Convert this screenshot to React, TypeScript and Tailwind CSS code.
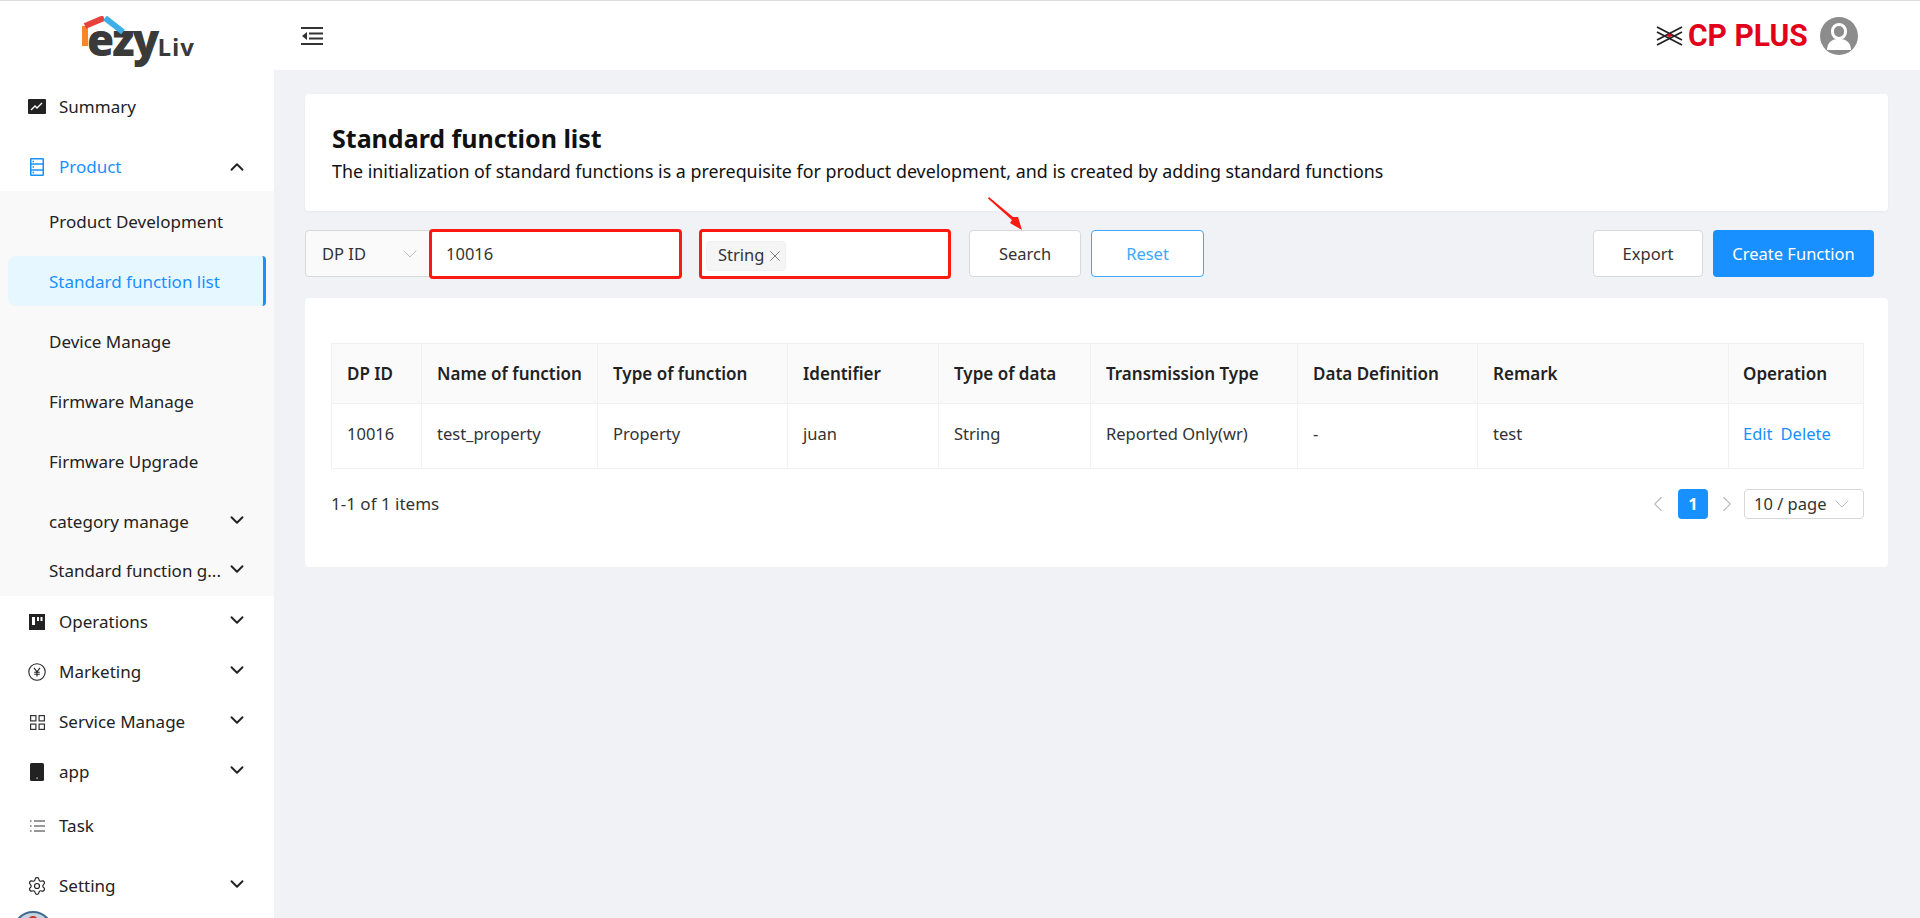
import { ChevronDown, ChevronUp, ChevronLeft, ChevronRight, X, Settings } from 'lucide-react'
import type { ReactNode } from 'react'

const columns = [
  { title: 'DP ID', value: '10016', width: 'w-[90px]' },
  { title: 'Name of function', value: 'test_property', width: 'w-[176px]' },
  { title: 'Type of function', value: 'Property', width: 'w-[190px]' },
  { title: 'Identifier', value: 'juan', width: 'w-[151px]' },
  { title: 'Type of data', value: 'String', width: 'w-[152px]' },
  { title: 'Transmission Type', value: 'Reported Only(wr)', width: 'w-[207px]' },
  { title: 'Data Definition', value: '-', width: 'w-[180px]' },
  { title: 'Remark', value: 'test', width: 'w-[251px]' },
]

function ChartIcon() {
  return (
    <svg viewBox="0 0 18 15" className="w-[18px] h-[15px]">
      <rect width="18" height="15" rx="1" fill="#222" />
      <path d="M3 11l4-4 2 2 5-5" stroke="#fff" strokeWidth="1.4" fill="none" />
    </svg>
  )
}

function ServerIcon() {
  return (
    <svg viewBox="0 0 14 18" className="ml-[2px] w-[14px] h-[18px]" fill="none" stroke="#1890ff" strokeWidth="1.5">
      <rect x="0.75" y="0.75" width="12.5" height="16.5" rx="0.5" />
      <path d="M0.75 6h12.5M0.75 12h12.5M2.5 3.4h1.5M2.5 9h1.5M2.5 14.6h1.5" />
    </svg>
  )
}

function BoardIcon() {
  return (
    <svg viewBox="0 0 16 16" className="ml-[1px] w-4 h-4">
      <rect width="16" height="16" fill="#222" />
      <rect x="3" y="3" width="3" height="8" fill="#fff" />
      <rect x="8" y="3" width="2" height="4" fill="#fff" />
      <rect x="11.5" y="3" width="2" height="4" fill="#fff" />
    </svg>
  )
}

function YenIcon() {
  return (
    <svg viewBox="0 0 18 18" className="w-[18px] h-[18px]" fill="none" stroke="#222" strokeWidth="1.1">
      <circle cx="9" cy="9" r="8.2" />
      <path d="M6 4.8l3 4 3-4M9 8.8v4.8M6.2 9.2h5.6M6.2 11.2h5.6" />
    </svg>
  )
}

function GridIcon() {
  return (
    <svg viewBox="0 0 15 15" className="ml-[2px] w-[15px] h-[15px]" fill="none" stroke="#333" strokeWidth="1.2">
      <rect x="0.6" y="0.6" width="5.3" height="5.3" />
      <rect x="9.1" y="0.6" width="5.3" height="5.3" />
      <rect x="0.6" y="9.1" width="5.3" height="5.3" />
      <rect x="9.1" y="9.1" width="5.3" height="5.3" />
    </svg>
  )
}

function PhoneIcon() {
  return (
    <svg viewBox="0 0 14 18" className="ml-[2px] w-[14px] h-[18px]">
      <rect width="14" height="18" rx="1.5" fill="#222" />
      <rect x="6.5" y="14.5" width="1.2" height="1.2" fill="#fff" />
    </svg>
  )
}

function TaskIcon() {
  return (
    <svg viewBox="0 0 15 12" className="ml-[2px] w-[15px] h-[12px]" fill="none" stroke="#333" strokeWidth="1.2">
      <path d="M4 1h11M4 6h11M4 11h11" />
      <path d="M0 1h1.6M0 6h1.6M0 11h1.6" />
    </svg>
  )
}

function MenuRow({ icon, label, height, active, open, arrow }: { icon: ReactNode; label: string; height: string; active?: boolean; open?: boolean; arrow?: boolean }) {
  return (
    <div className={`flex items-center pl-[28px] pr-[26px] ${height} ${active ? 'text-[#1890ff]' : 'text-[#222]'}`}>
      <div className="w-[31px] flex items-center">{icon}</div>
      <span className="flex-1">{label}</span>
      {arrow && (open ? <ChevronUp className="w-[22px] h-[22px] text-[#222]" strokeWidth={2.1} /> : <ChevronDown className="w-[22px] h-[22px] text-[#222] -mt-1" strokeWidth={2.1} />)}
    </div>
  )
}

function SubRow({ label, height, arrow }: { label: string; height: string; arrow?: boolean }) {
  return (
    <div className={`flex items-center pl-[49px] pr-[26px] text-[#222] ${height}`}>
      <span className="flex-1 whitespace-nowrap">{label}</span>
      {arrow && <ChevronDown className="w-[22px] h-[22px] -mt-1 shrink-0" strokeWidth={2.1} />}
    </div>
  )
}

function Sidebar() {
  return (
    <aside className="w-[274px] shrink-0 bg-white h-[917px] overflow-hidden text-[17px]">
      {/* Logo */}
      <div className="h-[69px] flex items-center justify-center">
        <div className="relative flex items-baseline mt-[6px] ml-[8px] font-extrabold text-[#3a3a3a] font-['Open_Sans',sans-serif]">
          <svg viewBox="0 0 44 34" className="absolute left-[-5px] top-[-1px] w-[44px] h-[34px]" fill="none" strokeWidth="6">
            <path d="M3 30V10" stroke="#f7862a" />
            <path d="M3 10L22 2" stroke="#e8403a" />
            <path d="M23 2L41 16" stroke="#3eaee8" />
          </svg>
          <span className="text-[44px] leading-none tracking-[-2px]">ezy</span>
          <span className="text-[24px] leading-none font-bold tracking-[1px]">Liv</span>
        </div>
      </div>

      <MenuRow icon={<ChartIcon />} label="Summary" height="h-[73px]" />
      <MenuRow icon={<ServerIcon />} label="Product" height="h-[48px]" active arrow open />

      {/* Product submenu */}
      <div className="bg-[#f9f9f9] h-[405px]">
        <SubRow label="Product Development" height="h-[65px] pb-[3px]" />
        <div className="ml-2 w-[258px] h-[50px] flex items-center pt-[2px] pl-[41px] bg-[#e6f7ff] text-[#1890ff] rounded-l-lg rounded-r border-r-[3px] border-[#1890ff]">
          Standard function list
        </div>
        <SubRow label="Device Manage" height="h-[70px] pt-[2px]" />
        <SubRow label="Firmware Manage" height="h-[50px] pt-[2px]" />
        <SubRow label="Firmware Upgrade" height="h-[70px] pt-[2px]" />
        <SubRow label="category manage" height="h-[50px] pt-[2px]" arrow />
        <SubRow label="Standard function g..." height="h-[50px]" arrow />
      </div>

      <MenuRow icon={<BoardIcon />} label="Operations" height="h-[50px] pt-[2px]" arrow />
      <MenuRow icon={<YenIcon />} label="Marketing" height="h-[50px] pt-[2px]" arrow />
      <MenuRow icon={<GridIcon />} label="Service Manage" height="h-[50px] pt-[2px]" arrow />
      <MenuRow icon={<PhoneIcon />} label="app" height="h-[50px] pt-[2px]" arrow />
      <MenuRow icon={<TaskIcon />} label="Task" height="h-[58px] pt-[2px]" />
      <MenuRow icon={<Settings className="w-[20px] h-[20px] -ml-[1px] text-[#222]" strokeWidth={1.4} />} label="Setting" height="h-[62px] pt-[2px]" arrow />

      {/* avatar, cut by the window bottom */}
      <div className="ml-[13px] -mt-[5px] w-[40px] h-[40px] rounded-full bg-[#c5d3de] border-2 border-[#3f6a91] flex justify-center pt-[3px]">
        <div className="w-[10px] h-[10px] rounded-full bg-[#c0392b]" />
      </div>
    </aside>
  )
}

function Header() {
  return (
    <header className="h-[69px] bg-white flex items-center pl-[27px] pr-[62px] justify-between">
      <svg viewBox="0 0 22 18" className="w-[22px] h-[18px]">
        <path d="M0 1h22M8 6.5h14M8 11.5h14M0 17h22" stroke="#333" strokeWidth="2" fill="none" />
        <path d="M1 9l5-4v8z" fill="#333" />
      </svg>
      <div className="flex items-center">
        <svg viewBox="0 0 27 20" className="w-[27px] h-[20px] mr-[5px]" fill="none" stroke="#222" strokeWidth="1.8">
          <path d="M1 1l25 13M26 1L1 14M1 6l25 13M26 6L1 19" />
          <path d="M13.5 7.5l3 2-3 2-3-2z" fill="#e2001a" stroke="none" />
        </svg>
        <span className="w-[119px] mr-[13px] font-['Roboto',sans-serif] font-bold text-[31px] leading-none text-[#e2001a] scale-x-[0.967] origin-left whitespace-nowrap">CP PLUS</span>
        <div className="w-[38px] h-[38px] rounded-full bg-[#8c8c8c] relative overflow-hidden">
          <div className="absolute left-[11px] top-[6px] w-[16px] h-[17px] rounded-full border-[3px] border-white" />
          <div className="absolute left-[7px] top-[22px] w-[24px] h-[11px] rounded-t-[10px] bg-white" />
        </div>
      </div>
    </header>
  )
}

export default function App() {
  return (
    <div className="w-[1920px] h-[918px] overflow-hidden relative bg-[#f0f2f5] border-t border-[#ddd] font-['Noto_Sans',sans-serif] text-[16.5px] text-[#222]">
      <div className="flex">
        <Sidebar />
        <div className="flex-1 min-w-0">
          <Header />

          <main className="pl-[31px] pr-[32px] pt-[24px]">
            {/* Title card */}
            <section className="bg-white rounded h-[117px] px-[27px] pt-[26px] shadow-[0_1px_3px_rgba(0,0,0,0.04)]">
              <h1 className="text-[25px] leading-[36px] font-bold text-[#111]">Standard function list</h1>
              <p className="text-[17.85px] leading-[30px] text-[#111] whitespace-nowrap">The initialization of standard functions is a prerequisite for product development, and is created by adding standard functions</p>
            </section>

            {/* Filters */}
            <div className="flex items-center mt-[18px] h-[50px]">
              <div className="w-[125px] h-[47px] -mt-[1px] pt-[2px] bg-[#fafafa] border border-[#d9d9d9] rounded-l flex items-center justify-between pl-[16px] pr-[7px] text-[#333]">
                DP ID
                <ChevronDown className="w-[24px] h-[24px] text-[#bfbfbf] -mt-[2px]" strokeWidth={1} />
              </div>
              <div className="-ml-[1px] w-[253px] h-[50px] bg-white border-[3px] border-[#fb1a12] rounded flex items-center pl-[14px] text-[#333]">10016</div>
              <div className="ml-[17px] w-[252px] h-[50px] bg-white border-[3px] border-[#fb1a12] rounded flex items-center pl-[4px]">
                <div className="mt-[3px] w-[80px] h-[30px] bg-[#f5f5f5] border border-[#f0f0f0] rounded-sm flex items-center justify-between pl-[11px] pr-[1px] text-[#333]">
                  String
                  <X className="w-[18px] h-[18px] text-[#777]" strokeWidth={1.3} />
                </div>
              </div>
              <button className="ml-[18px] w-[112px] h-[47px] -mt-[1px] pt-[2px] bg-white border border-[#d9d9d9] rounded text-[#333]">Search</button>
              <button className="ml-[10px] w-[113px] h-[47px] -mt-[1px] pt-[2px] bg-white border border-[#40a9ff] rounded text-[#40a9ff]">Reset</button>
              <div className="ml-auto flex gap-[10px] mr-[14px] -mt-[1px]">
                <button className="w-[110px] h-[47px] pt-[2px] bg-white border border-[#d9d9d9] rounded text-[#333]">Export</button>
                <button className="w-[161px] h-[47px] pt-[2px] bg-[#1890ff] rounded text-white">Create Function</button>
              </div>
            </div>

            {/* Table card */}
            <section className="bg-white rounded mt-[19px] h-[269px] px-[26px] pt-[45px]">
              <div className="flex border border-[#f0f0f0] h-[126px] w-[1533px]">
                {columns.map((col) => (
                  <div key={col.title} className={`${col.width} shrink-0 border-r border-[#f0f0f0]`}>
                    <div className="h-[60px] bg-[#fafafa] border-b border-[#f0f0f0] flex items-center pl-[15px] text-[17px] font-semibold text-[#222] whitespace-nowrap">{col.title}</div>
                    <div className="h-[63px] pb-[2px] flex items-center pl-[15px] text-[#333] whitespace-nowrap">{col.value}</div>
                  </div>
                ))}
                <div className="flex-1">
                  <div className="h-[60px] bg-[#fafafa] border-b border-[#f0f0f0] flex items-center pl-[14px] text-[17px] font-semibold text-[#222]">Operation</div>
                  <div className="h-[63px] pb-[2px] flex items-center gap-[8px] pl-[14px] text-[#1890ff]">
                    <span>Edit</span>
                    <span>Delete</span>
                  </div>
                </div>
              </div>

              {/* Pagination */}
              <div className="flex items-center justify-between mt-[20px] h-[30px] w-[1533px] text-[#333]">
                <span className="text-[17px]">1-1 of 1 items</span>
                <div className="flex items-center">
                  <ChevronLeft className="w-[26px] h-[26px] text-[#bbb]" strokeWidth={1} />
                  <div className="ml-[7px] w-[30px] h-[30px] rounded bg-[#1890ff] text-white font-bold flex items-center justify-center">1</div>
                  <ChevronRight className="ml-[6px] w-[26px] h-[26px] text-[#bbb]" strokeWidth={1} />
                  <div className="ml-[4px] w-[120px] h-[30px] border border-[#d9d9d9] rounded flex items-center justify-between pl-[9px] pr-[9px]">
                    10 / page
                    <ChevronDown className="w-[24px] h-[24px] text-[#bfbfbf]" strokeWidth={1} />
                  </div>
                </div>
              </div>
            </section>
          </main>
        </div>
      </div>

      {/* Red annotation arrow */}
      <svg viewBox="0 0 36 36" className="absolute left-[987px] top-[195px] w-[36px] h-[36px]">
        <path d="M2 1L26 21L31 21L35 34L23 27L25 24L1 2.5z" fill="#fb1a12" />
      </svg>
    </div>
  )
}
